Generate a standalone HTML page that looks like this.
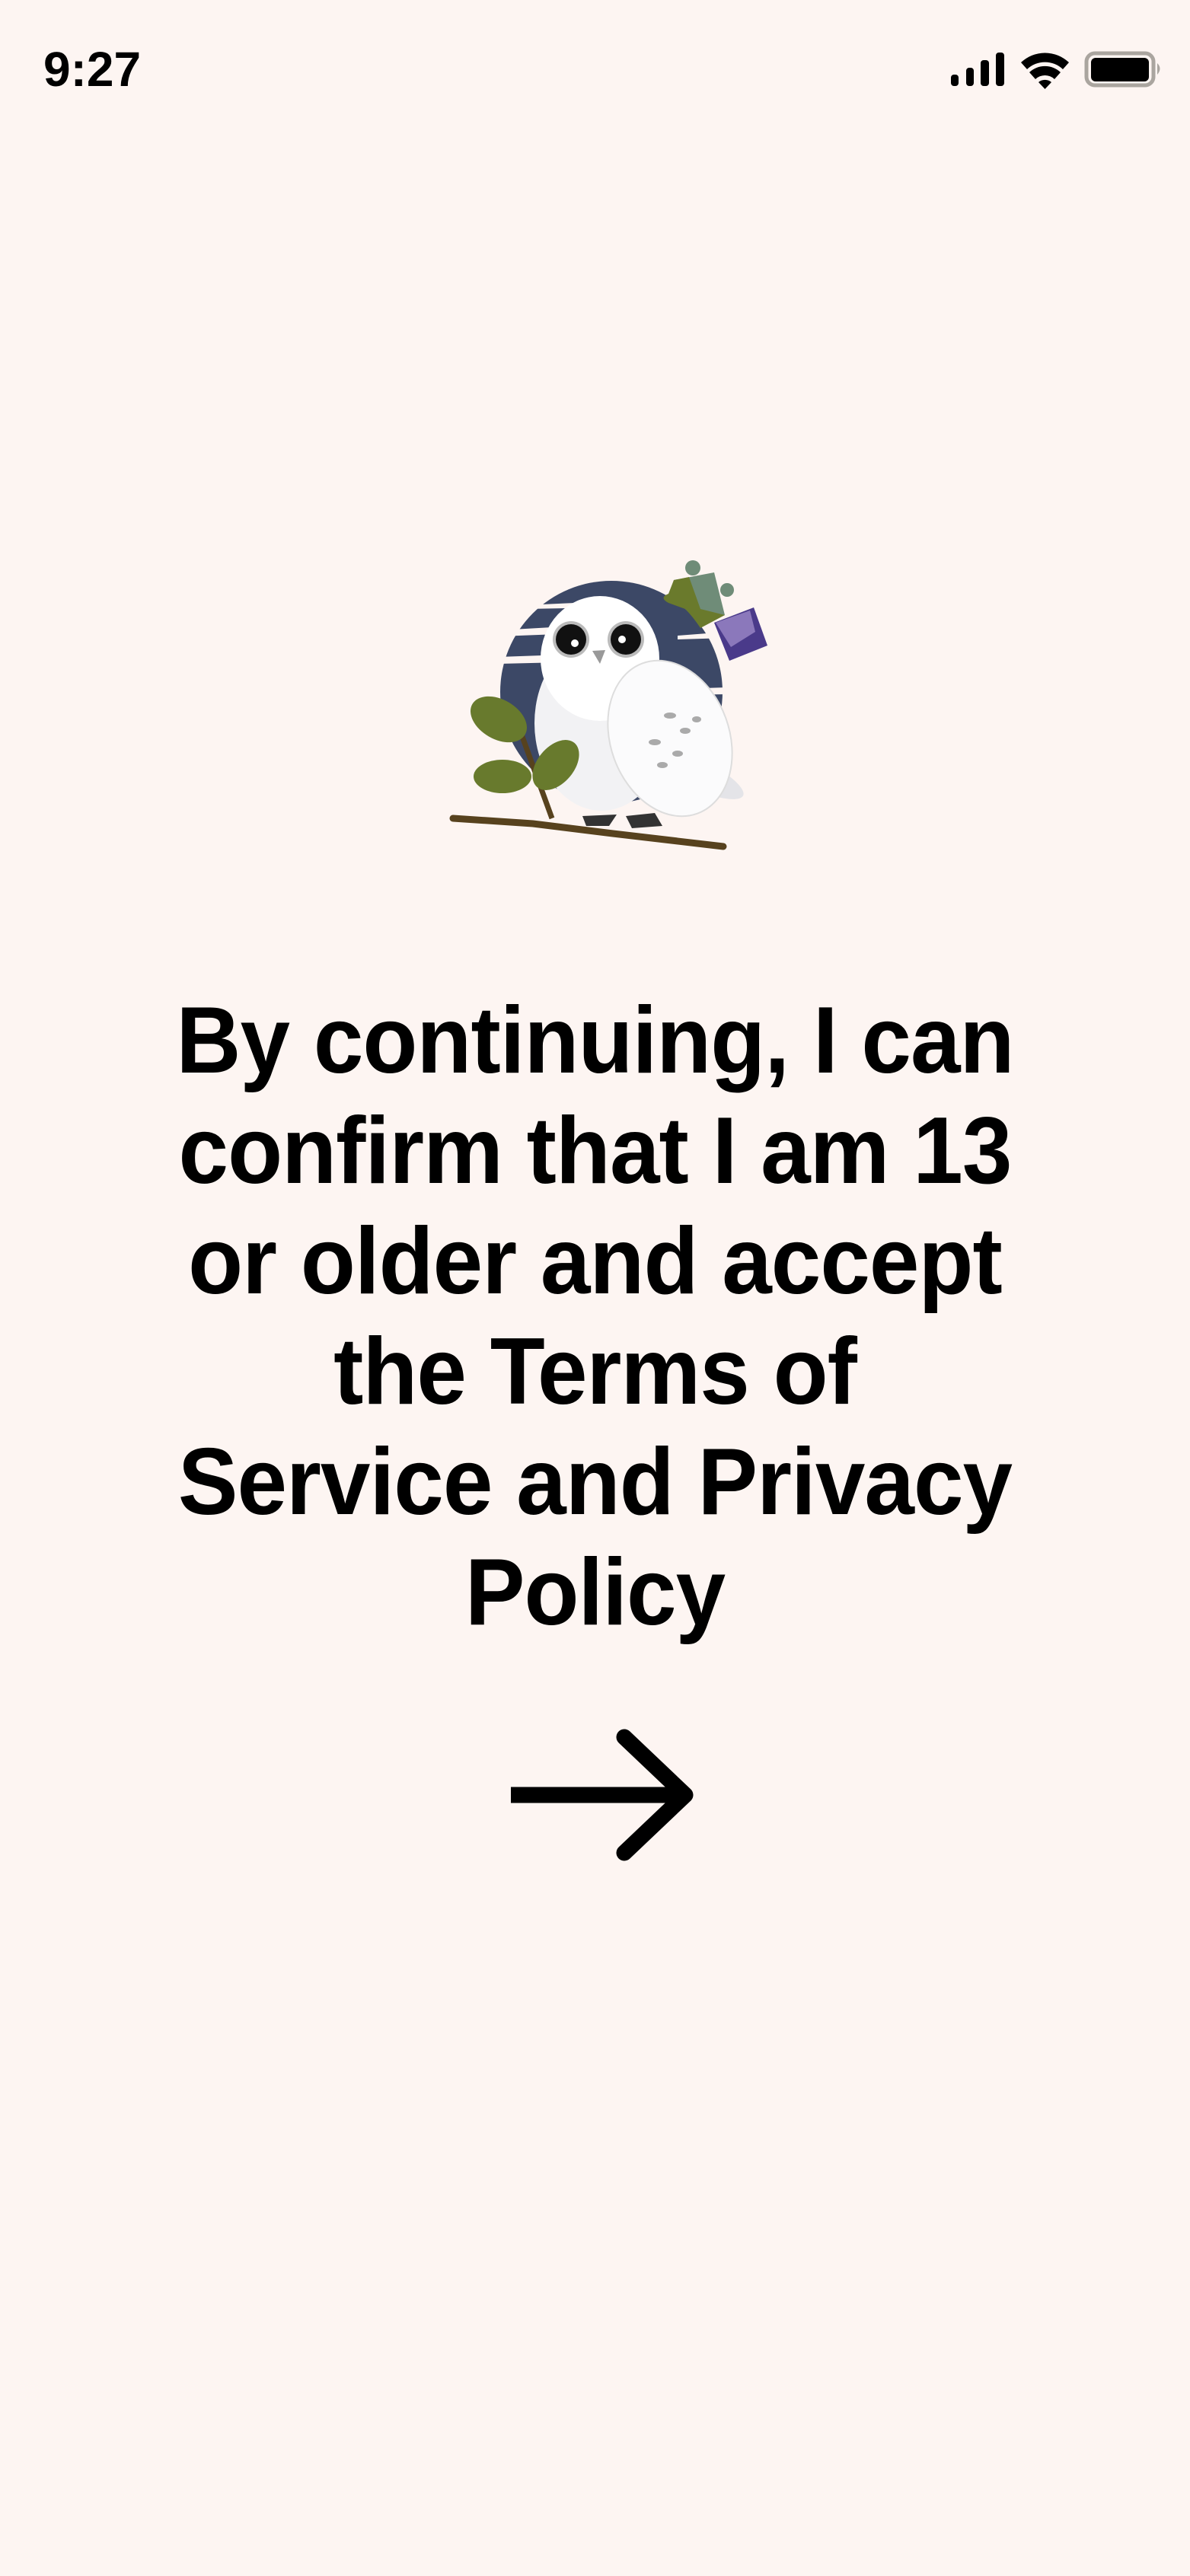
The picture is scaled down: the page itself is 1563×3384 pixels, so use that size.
<!DOCTYPE html>
<html><head><meta charset="utf-8"><style>
html,body{margin:0;padding:0}
body{width:1563px;height:3384px;background:#fdf5f2;position:relative;overflow:hidden;font-family:"Liberation Sans",Arial,sans-serif}
.time{position:absolute;left:57px;top:56px;font-size:64px;font-weight:bold;line-height:70px;color:#000}
.txt{position:absolute;left:0;width:1563px;top:1295px;text-align:center;font-weight:bold;font-size:124px;line-height:145px;color:#000;letter-spacing:-1px;transform:scaleX(0.95);transform-origin:781px 0}
</style></head><body>
<div class="time">9:27</div>
<svg style="position:absolute;left:0;top:0" width="1563" height="140">
<rect x="1249" y="98" width="10" height="15" rx="4"/>
<rect x="1269" y="89" width="10" height="24" rx="4"/>
<rect x="1288" y="79" width="11" height="34" rx="4"/>
<rect x="1308" y="69" width="11" height="44" rx="4"/>
<path d="M1341 82 A46 46 0 0 1 1404 82 L1396 91 A34 34 0 0 0 1349 91 Z"/>
<path d="M1352 95 A30 30 0 0 1 1393 95 L1385 104 A18 18 0 0 0 1360 104 Z"/>
<path d="M1364 108 A13 13 0 0 1 1381 108 L1372.5 117 Z"/>
<rect x="1427" y="70" width="88" height="42" rx="11" fill="none" stroke="#aaa59f" stroke-width="5"/>
<rect x="1433" y="76" width="76" height="31" rx="6"/>
<path d="M1520 83 Q1527 90 1520 98 Z" fill="#aaa59f"/>
</svg>
<svg style="position:absolute;left:560px;top:700px" width="480" height="460" viewBox="0 0 480 460">
<circle cx="243" cy="209" r="146" fill="#3c4866"/>
<path d="M95 128 L200 122 L200 132 L95 136Z M95 163 L180 160 L180 170 L95 172Z M130 95 L240 90 L240 98 L130 100Z M330 135 L395 130 L395 138 L330 140Z M330 205 L395 203 L395 212 L330 213Z" fill="#fdf5f2"/>
<path d="M325 62 L378 52 L392 108 L358 118 L348 85 L318 92Z" fill="#6f8c78"/>
<path d="M325 62 L345 58 L360 100 L392 108 L360 125 Q350 110 340 100 L318 92 Q305 85 318 80Z" fill="#6a7a2c"/>
<circle cx="350" cy="46" r="10" fill="#6f8c78"/>
<circle cx="395" cy="75" r="9" fill="#6f8c78"/>
<path d="M378 118 L430 98 L448 148 L398 168Z" fill="#4a3a8a"/>
<path d="M380 118 L425 102 L432 130 L400 150Z" fill="#8b78bb"/>
<ellipse cx="330" cy="305" rx="95" ry="22" transform="rotate(25 330 305)" fill="#e4e4e8"/>
<ellipse cx="230" cy="250" rx="88" ry="115" fill="#f2f2f4"/>
<ellipse cx="228" cy="165" rx="78" ry="82" fill="#fff"/>
<ellipse cx="320" cy="270" rx="78" ry="105" transform="rotate(-20 320 270)" fill="#fbfbfc" stroke="#ddd" stroke-width="2"/>
<g fill="#aaa"><ellipse cx="320" cy="240" rx="8" ry="4"/><ellipse cx="340" cy="260" rx="7" ry="4"/><ellipse cx="300" cy="275" rx="8" ry="4"/><ellipse cx="330" cy="290" rx="7" ry="4"/><ellipse cx="355" cy="245" rx="6" ry="4"/><ellipse cx="310" cy="305" rx="7" ry="4"/></g>
<circle cx="190" cy="140" r="24" fill="#bbb"/><circle cx="190" cy="140" r="20" fill="#111"/><circle cx="195" cy="145" r="5" fill="#fff"/>
<circle cx="262" cy="140" r="24" fill="#bbb"/><circle cx="262" cy="140" r="20" fill="#111"/><circle cx="257" cy="140" r="5" fill="#fff"/>
<path d="M218 155 L235 154 L228 172Z" fill="#999"/>
<path d="M205 372 L250 370 L240 385 L210 385Z M262 372 L300 368 L310 385 L270 388Z" fill="#333"/>
<path d="M35 375 L140 382 L245 395 L390 412" stroke="#57421e" stroke-width="9" fill="none" stroke-linecap="round"/>
<path d="M125 265 L165 375" stroke="#57421e" stroke-width="7" fill="none"/>
<ellipse cx="95" cy="245" rx="40" ry="26" transform="rotate(30 95 245)" fill="#687a2d"/>
<ellipse cx="100" cy="320" rx="38" ry="22" fill="#687a2d"/>
<ellipse cx="170" cy="305" rx="38" ry="24" transform="rotate(-50 170 305)" fill="#687a2d"/>
</svg>
<div class="txt">By continuing, I can<br>confirm that I am 13<br>or older and accept<br>the Terms of<br>Service and Privacy<br>Policy</div>
<svg style="position:absolute;left:660px;top:2270px" width="260" height="180">
<path d="M11 88 L241 88" stroke="#000" stroke-width="21" fill="none"/>
<path d="M160 12 L240 88 L160 164" stroke="#000" stroke-width="21" fill="none" stroke-linecap="round" stroke-linejoin="round"/>
</svg>
</body></html>
